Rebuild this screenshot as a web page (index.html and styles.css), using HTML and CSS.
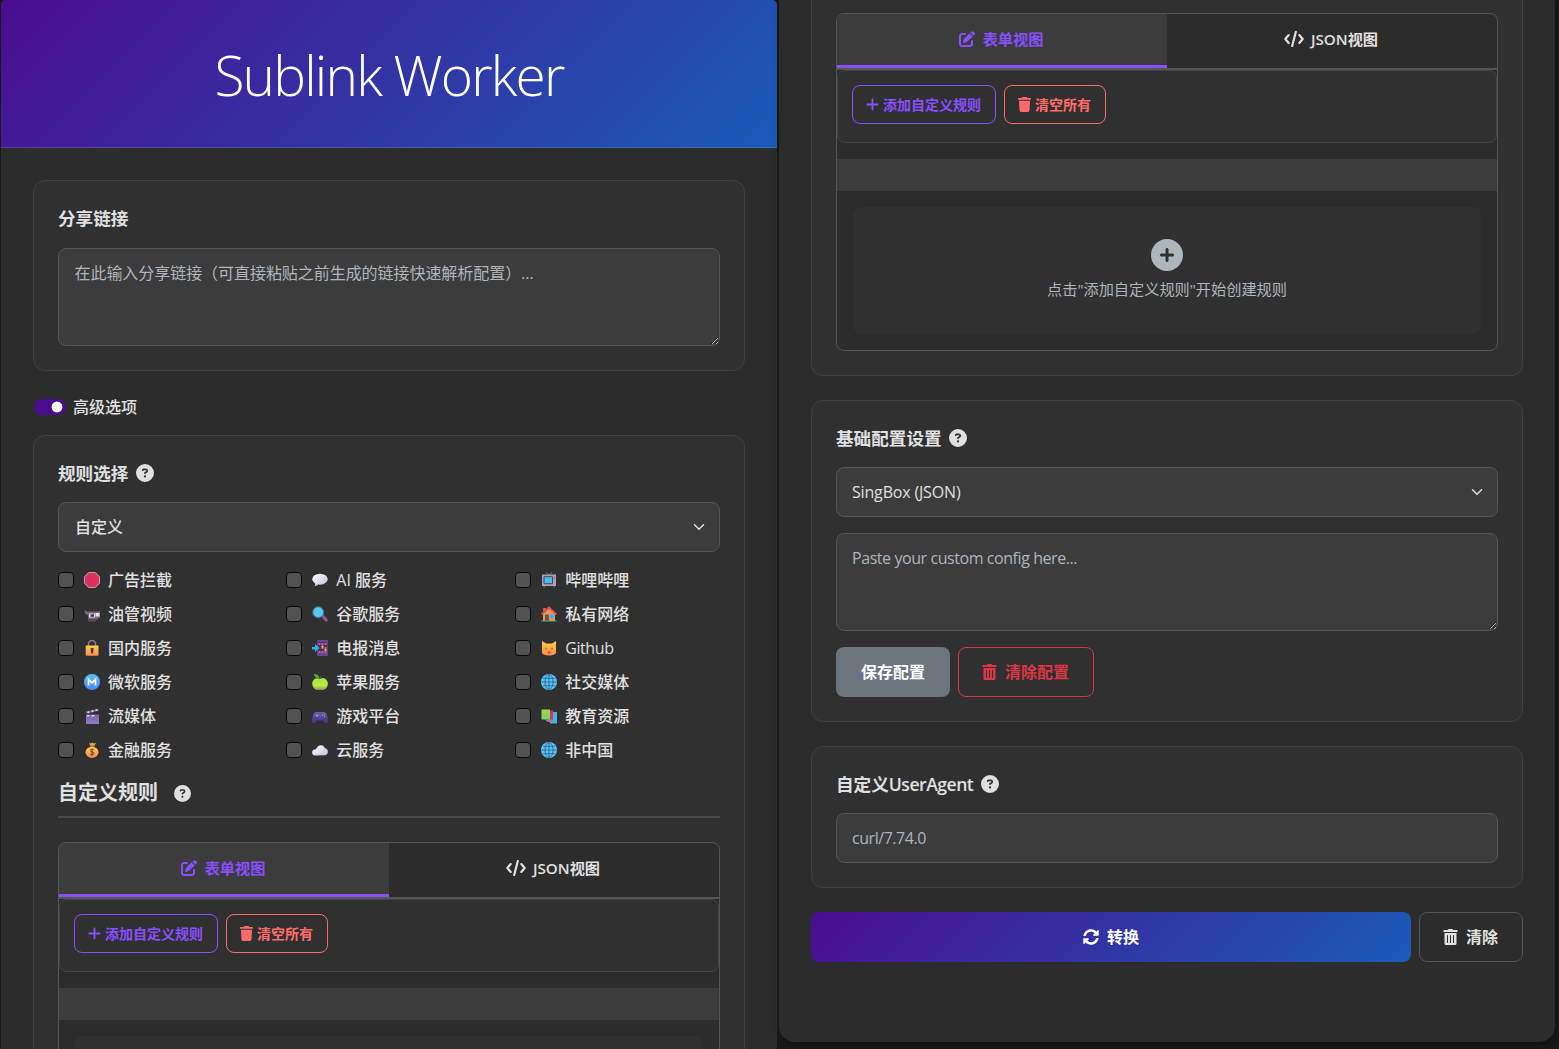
FILE: index.html
```html
<!DOCTYPE html>
<html lang="zh-CN">
<head>
<meta charset="utf-8">
<title>Sublink Worker</title>
<link rel="stylesheet" href="styles.css">
</head>
<body>
<svg class="sprite" aria-hidden="true">
  <defs>
    <linearGradient id="g-red"><stop offset="0" stop-color="#cf2f71"/><stop offset="1" stop-color="#e8304c"/></linearGradient>
    <linearGradient id="g-gold" x2="0" y2="1"><stop offset="0" stop-color="#ffd044"/><stop offset="1" stop-color="#f78a4e"/></linearGradient>
    <linearGradient id="g-white" x2="1" y2="1"><stop offset="0" stop-color="#ffffff"/><stop offset="1" stop-color="#c9bfdc"/></linearGradient>
    <linearGradient id="g-blue" x2="0" y2="1"><stop offset="0" stop-color="#4fc3f7"/><stop offset="1" stop-color="#4b86f5"/></linearGradient>
    <linearGradient id="g-purple" x2="0" y2="1"><stop offset="0" stop-color="#7a6499"/><stop offset="1" stop-color="#8d7bd0"/></linearGradient>
    <linearGradient id="g-pad" x2="0" y2="1"><stop offset="0" stop-color="#6a5fa8"/><stop offset="1" stop-color="#532a80"/></linearGradient>
    <linearGradient id="g-apple" x2="0" y2="1"><stop offset="0" stop-color="#9be83c"/><stop offset=".6" stop-color="#c2ea42"/><stop offset="1" stop-color="#8c9a62"/></linearGradient>
    <linearGradient id="g-green" x2="0" y2="1"><stop offset="0" stop-color="#a5d84c"/><stop offset="1" stop-color="#6fd070"/></linearGradient>
  </defs>
  <symbol id="question" viewBox="0 0 512 512"><path d="M256 512A256 256 0 1 0 256 0a256 256 0 1 0 0 512zM169.8 165.3c7.9-22.3 29.1-37.3 52.8-37.3h58.3c34.9 0 63.1 28.3 63.1 63.1c0 22.6-12.1 43.5-31.7 54.8L280 264.4c-.2 13-10.9 23.6-24 23.6c-13.3 0-24-10.7-24-24V250.5c0-8.6 4.6-16.5 12.1-20.8l44.3-25.4c4.7-2.7 7.6-7.7 7.6-13.1c0-8.4-6.8-15.1-15.1-15.1H222.6c-3.4 0-6.4 2.1-7.5 5.3l-.4 1.2c-4.4 12.5-18.2 19-30.6 14.6s-19-18.2-14.6-30.6l.4-1.2zM224 352a32 32 0 1 1 64 0 32 32 0 1 1 -64 0z"/></symbol>
  <symbol id="circle-plus" viewBox="0 0 512 512"><path d="M256 512A256 256 0 1 0 256 0a256 256 0 1 0 0 512zM232 344V280H168c-13.3 0-24-10.7-24-24s10.7-24 24-24h64V168c0-13.3 10.7-24 24-24s24 10.7 24 24v64h64c13.3 0 24 10.7 24 24s-10.7 24-24 24H280v64c0 13.3-10.7 24-24 24s-24-10.7-24-24z"/></symbol>
  <symbol id="plus" viewBox="0 0 448 512"><path d="M256 80c0-17.700-14.300-32-32-32s-32 14.300-32 32V224H48c-17.700 0-32 14.300-32 32s14.300 32 32 32H192V432c0 17.700 14.300 32 32 32s32-14.300 32-32V288H400c17.700 0 32-14.300 32-32s-14.300-32-32-32H256V80z"/></symbol>
  <symbol id="trash" viewBox="0 0 448 512"><path d="M135.200 17.700L128 32H32C14.300 32 0 46.300 0 64S14.300 96 32 96H416c17.700 0 32-14.300 32-32s-14.300-32-32-32H320l-7.200-14.300C307.400 6.800 296.300 0 284.200 0H163.800c-12.100 0-23.200 6.800-28.600 17.700zM416 128H32L53.200 467c1.600 25.300 22.600 45 47.900 45H346.900c25.300 0 46.300-19.700 47.900-45L416 128z"/></symbol>
  <symbol id="trash-alt" viewBox="0 0 448 512"><path d="M32 464a48 48 0 0 0 48 48h288a48 48 0 0 0 48-48V128H32zm272-256a16 16 0 0 1 32 0v224a16 16 0 0 1-32 0zm-96 0a16 16 0 0 1 32 0v224a16 16 0 0 1-32 0zm-96 0a16 16 0 0 1 32 0v224a16 16 0 0 1-32 0zM432 32H312l-9.400-18.700A24 24 0 0 0 281.100 0H166.800a23.720 23.720 0 0 0-21.400 13.300L136 32H16A16 16 0 0 0 0 48v32a16 16 0 0 0 16 16h416a16 16 0 0 0 16-16V48a16 16 0 0 0-16-16z"/></symbol>
  <symbol id="edit" viewBox="0 0 512 512"><path d="M471.600 21.700c-21.900-21.900-57.300-21.900-79.200 0L362.300 51.700l97.900 97.900 30.100-30.100c21.900-21.900 21.900-57.300 0-79.200L471.600 21.700zm-299.200 220c-6.100 6.100-10.800 13.600-13.500 21.900l-29.600 88.800c-2.900 8.600-.6 18.100 5.800 24.600s15.900 8.700 24.600 5.800l88.800-29.600c8.200-2.700 15.700-7.400 21.900-13.500L437.700 172.300 339.700 74.300 172.400 241.700zM96 64C43 64 0 107 0 160V416c0 53 43 96 96 96H352c53 0 96-43 96-96V320c0-17.700-14.300-32-32-32s-32 14.300-32 32v96c0 17.700-14.300 32-32 32H96c-17.700 0-32-14.300-32-32V160c0-17.700 14.300-32 32-32h96c17.700 0 32-14.300 32-32s-14.300-32-32-32H96z"/></symbol>
  <symbol id="sync" viewBox="0 0 512 512"><path d="M370.720 133.280C339.458 104.008 298.888 87.962 255.848 88c-77.458.068-144.328 53.178-162.791 126.850-1.344 5.363-6.122 9.150-11.651 9.150H24.103c-7.498 0-13.194-6.807-11.807-14.176C33.933 94.924 134.813 8 256 8c66.448 0 126.791 26.136 171.315 68.685L463.030 40.970C478.149 25.851 504 36.559 504 57.941V192c0 13.255-10.745 24-24 24H345.941c-21.382 0-32.090-25.851-16.971-40.971l41.750-41.749zM32 296h134.059c21.382 0 32.090 25.851 16.971 40.971l-41.750 41.750c31.262 29.273 71.835 45.319 114.876 45.280 77.418-.070 144.315-53.144 162.787-126.849 1.344-5.363 6.122-9.150 11.651-9.150h57.304c7.498 0 13.194 6.807 11.807 14.176C478.067 417.076 377.187 504 256 504c-66.448 0-126.791-26.136-171.315-68.685L48.970 471.030C33.851 486.149 8 475.441 8 454.059V320c0-13.255 10.745-24 24-24z"/></symbol>
  <symbol id="code" viewBox="0 0 640 512"><path d="M150 130 42 256l108 126M490 130l108 126-108 126M378 32 262 480" fill="none" stroke="currentColor" stroke-width="70" stroke-linecap="round" stroke-linejoin="round"/></symbol>

  <symbol id="e-stop" viewBox="0 0 16 16"><path d="M5 .3h6L15.700 5v6L11 15.700H5L.3 11V5z" fill="url(#g-red)" stroke="#dcd3e2" stroke-width=".8"/></symbol>
  <symbol id="e-camera" viewBox="0 0 16 16"><path d="M.5 4.500h2v1h11.500l2-.5v7H14v1.500H4V9L1 7.500z" fill="#75677f"/><path d="M5 7.500h6v4H5z" fill="#e3dbe8"/><path d="M6.500 8.200h3.500v2.600H6.500z" fill="#4b3d59"/><path d="M11.500 7h4v3.500h-4z" fill="#e9e2ed"/><path d="M4 13.500h8v2H4z" fill="#5c4669"/></symbol>
  <symbol id="e-lock" viewBox="0 0 16 16"><path d="M4.500 7V4a3.500 3.500 0 0 1 7 0v3" fill="none" stroke="#8d7d99" stroke-width="1.600"/><rect x="1.700" y="5.500" width="12.800" height="10.300" rx=".8" fill="url(#g-gold)"/><path d="M6.700 8h2.800v2.500L9 13.500H7.300L6.700 10.500z" fill="#50364c"/></symbol>
  <symbol id="e-metro" viewBox="0 0 16 16"><circle cx="8" cy="8" r="8" fill="url(#g-blue)"/><path d="M4.500 11.500V5.400L8 8.900l3.500-3.500v6.100" fill="none" stroke="#fff" stroke-width="1.700"/></symbol>
  <symbol id="e-clapper" viewBox="0 0 16 16"><path d="M2 6.500h13V16H2z" fill="url(#g-purple)"/><path d="m1.500 3.500 12.800-3 .5 2.600-12.800 3z" fill="#685080"/><path d="m3 4 2-1 1 1-2 1.500zm4-1 2-1 1 1-2 1.500zm4-1 2-1 1 1-2 1.200zM3 7h3L5 8.500H3zm5 0h3l-1 1.500H7z" fill="#d8d1f2"/></symbol>
  <symbol id="e-money" viewBox="0 0 16 16"><path d="M5 .5 7 1.500l1.500-1 1 1L12 .7l-2 4H6.500z" fill="#e6a83a"/><ellipse cx="8" cy="10.300" rx="6.500" ry="5.600" fill="url(#g-gold)"/><path d="M6 4h4" stroke="#a0596a"/><path d="M10 8c-.7-1-3.700-1-3.700.6 0 1.500 3.700 1 3.700 2.600S7 13 6 11.800M8 6.500V14" fill="none" stroke="#684046"/></symbol>
  <symbol id="e-bubble" viewBox="0 0 16 16"><path d="m2.500 10 4 1.500c-.5 1.800-2 2.600-4 2.800.8-1 .8-2 0-4.300" fill="#c7bdd8"/><ellipse cx="8" cy="7.200" rx="7.700" ry="5.500" fill="url(#g-white)"/></symbol>
  <symbol id="e-search" viewBox="0 0 16 16"><path d="m10.500 10 3.700 4" stroke="#875b8d" stroke-width="3.200" stroke-linecap="round"/><circle cx="6.200" cy="6.200" r="5.400" fill="#58c9ec" stroke="#367f9d"/></symbol>
  <symbol id="e-phone" viewBox="0 0 16 16"><rect x="5" width="11" height="16" rx="1" fill="#65489a"/><rect x="5.800" y="2" width="9.400" height="11" fill="#43346f"/><path d="M6.500 4h2m1 0h2m1 0h2m-5 4h2m1 0h2m-8 4h2m1 0h2m1 0h2" stroke="#ff795e" stroke-width="1.700"/><path d="M9.500 6.500h2m1 3.500h2" stroke="#ffd75d" stroke-width="1.500"/><path d="M0 7h3V4l4.500 4L3 12V9.500H0z" fill="#30afe9"/></symbol>
  <symbol id="e-apple" viewBox="0 0 16 16"><path d="M8 5c2-1.300 4.500-1.300 6.300.7 2.700 3 1.600 7.300-1.300 9.600-1.600 1.200-3 .5-5 .5s-3.500.5-5-.5C.2 13-.9 8.300 2 5.500 4 3.700 6 4.200 8 5z" fill="url(#g-apple)"/><path d="M1.500.3c4-.6 6 1 6 4.200C4.200 4.500 2.500 3 1.500.3z" fill="#56a82c"/><path d="M7.500 5 9 2" stroke="#78593c"/></symbol>
  <symbol id="e-game" viewBox="0 0 16 16"><path d="M4 4h8c3 0 4 6 3.800 9-.1 2.500-1.600 3-3 1.500L11 12.500H5l-1.800 2c-1.400 1.500-3 .8-3-1.500C.1 10 1 4 4 4z" fill="url(#g-pad)"/><path d="M3.500 7.500h3M5 6v3" stroke="#6fa7cf"/><circle cx="12.500" cy="6" r=".8" fill="#f0555f"/><circle cx="12.500" cy="8.500" r=".8" fill="#4bb878"/><circle cx="10.700" cy="7.200" r=".8" fill="#4fa4e9"/></symbol>
  <symbol id="e-cloud" viewBox="0 0 16 16"><path d="M3.500 13.500C-.7 13.500-1 8 2.700 7.500 4 7.500 4 7 5 5.500c2-3.500 7-3 7.800.8 4 .3 4.200 6.200.2 6.900z" fill="url(#g-white)"/></symbol>
  <symbol id="e-tv" viewBox="0 0 16 16"><path d="m5 .5 3 2.500 3-2.500" fill="none" stroke="#8b8291" stroke-width=".8"/><path d="M1 2.500h14v11.500H1z" fill="#aba1b3"/><path d="M3 4.700h8.500v7H3z" fill="#43bdf3" stroke="#4d3f5b"/><path d="M13 4.500h1v3h-1z" fill="#dd5370"/><path d="M2 14h12v1.500h-2V14H4v1.500H2z" fill="#64507b"/></symbol>
  <symbol id="e-house" viewBox="0 0 16 16"><path d="M2 2h3v5H2z" fill="#b9654f"/><path d="M2 8 8 2l6 6v7H2z" fill="#d99a67"/><path d="m.7 8.500 7.300-7 7.300 7" fill="none" stroke="#ed5142" stroke-width="1.800"/><path d="M4 8.500h4V15H4z" fill="#80503f"/><path d="M9 8.500h4v3.500H9z" fill="#47ade4"/><path d="M.3 15h15.400" stroke="#42b66f"/></symbol>
  <symbol id="e-cat" viewBox="0 0 16 16"><path d="M1 1l4 2.500h6L15 1v11.500c0 4-14 4-14 0z" fill="url(#g-gold)"/><path d="M4.500 8.500h1M10.500 8.500h1" stroke="#5b3e3c" stroke-width="1.600"/><path d="M6 11.500h4L8 14z" fill="#d93953"/></symbol>
  <symbol id="e-globe" viewBox="0 0 16 16"><circle cx="8" cy="8" r="8" fill="#5cc4f8"/><path d="M8 .5v15M.5 8h15M2 4.300h12M2 11.700h12" stroke="#24608d" stroke-width=".8"/><ellipse cx="8" cy="8" rx="4" ry="7.500" fill="none" stroke="#24608d" stroke-width=".8"/></symbol>
  <symbol id="e-books" viewBox="0 0 16 16"><path d="M9 4h7v11.500H9z" fill="#3eb7ed"/><path d="M7 2.500h5V14H7z" fill="#dc2f65"/><path d="M3.500 11.500H12V14H7z" fill="#b87696"/><path d="M.5 1.500H9v10H.5z" fill="url(#g-green)"/></symbol>
</svg>

<div class="screen">
  <section class="pane pane-start">
    <header class="hero"><h1>Sublink Worker</h1></header>
    <div class="pane-body">
      <div class="card">
        <label class="label">分享链接</label>
        <textarea class="control area share" placeholder="在此输入分享链接（可直接粘贴之前生成的链接快速解析配置）..."></textarea>
      </div>
      <div class="switch-row"><span class="switch"></span><span>高级选项</span></div>
      <div class="card tall">
        <label class="label">规则选择 <svg class="help"><use href="#question"/></svg></label>
        <div class="control select"><span>自定义</span><svg class="chevron" viewBox="0 0 16 16"><path d="m2 5 6 6 6-6"/></svg></div>
        <div class="rules">
          <label><i class="box"></i><svg><use href="#e-stop"/></svg><span>广告拦截</span></label>
          <label><i class="box"></i><svg><use href="#e-bubble"/></svg><span>AI 服务</span></label>
          <label><i class="box"></i><svg><use href="#e-tv"/></svg><span>哔哩哔哩</span></label>
          <label><i class="box"></i><svg><use href="#e-camera"/></svg><span>油管视频</span></label>
          <label><i class="box"></i><svg><use href="#e-search"/></svg><span>谷歌服务</span></label>
          <label><i class="box"></i><svg><use href="#e-house"/></svg><span>私有网络</span></label>
          <label><i class="box"></i><svg><use href="#e-lock"/></svg><span>国内服务</span></label>
          <label><i class="box"></i><svg><use href="#e-phone"/></svg><span>电报消息</span></label>
          <label><i class="box"></i><svg><use href="#e-cat"/></svg><span class="github">Github</span></label>
          <label><i class="box"></i><svg><use href="#e-metro"/></svg><span>微软服务</span></label>
          <label><i class="box"></i><svg><use href="#e-apple"/></svg><span>苹果服务</span></label>
          <label><i class="box"></i><svg><use href="#e-globe"/></svg><span>社交媒体</span></label>
          <label><i class="box"></i><svg><use href="#e-clapper"/></svg><span>流媒体</span></label>
          <label><i class="box"></i><svg><use href="#e-game"/></svg><span>游戏平台</span></label>
          <label><i class="box"></i><svg><use href="#e-books"/></svg><span>教育资源</span></label>
          <label><i class="box"></i><svg><use href="#e-money"/></svg><span>金融服务</span></label>
          <label><i class="box"></i><svg><use href="#e-cloud"/></svg><span>云服务</span></label>
          <label><i class="box"></i><svg><use href="#e-globe"/></svg><span>非中国</span></label>
        </div>
        <h2 class="section-title">自定义规则 <svg class="help small"><use href="#question"/></svg></h2>
        <div class="custom">
          <div class="tabs">
            <div class="tab active"><svg class="i-edit"><use href="#edit"/></svg>表单视图</div>
            <div class="tab"><svg class="i-code"><use href="#code"/></svg><span>JSON视图</span></div>
          </div>
          <div class="toolbar">
            <button class="mini add"><svg><use href="#plus"/></svg>添加自定义规则</button>
            <button class="mini wipe"><svg><use href="#trash"/></svg>清空所有</button>
          </div>
          <div class="strip"></div>
          <div class="empty"></div>
        </div>
      </div>
    </div>
  </section>

  <section class="pane pane-end">
    <div class="card continued">
      <div class="custom">
        <div class="tabs">
          <div class="tab active"><svg class="i-edit"><use href="#edit"/></svg>表单视图</div>
          <div class="tab"><svg class="i-code"><use href="#code"/></svg><span>JSON视图</span></div>
        </div>
        <div class="toolbar">
          <button class="mini add"><svg><use href="#plus"/></svg>添加自定义规则</button>
          <button class="mini wipe"><svg><use href="#trash"/></svg>清空所有</button>
        </div>
        <div class="strip"></div>
        <div class="empty"><svg><use href="#circle-plus"/></svg><p>点击"添加自定义规则"开始创建规则</p></div>
      </div>
    </div>
    <div class="card">
      <label class="label">基础配置设置 <svg class="help"><use href="#question"/></svg></label>
      <div class="control select format"><span>SingBox (JSON)</span><svg class="chevron" viewBox="0 0 16 16"><path d="m2 5 6 6 6-6"/></svg></div>
      <textarea class="control area config" placeholder="Paste your custom config here..."></textarea>
      <div class="actions">
        <button class="btn save">保存配置</button>
        <button class="btn clear-config"><svg><use href="#trash-alt"/></svg>清除配置</button>
      </div>
    </div>
    <div class="card">
      <label class="label"><span>自定义<span class="agent">UserAgent</span></span> <svg class="help"><use href="#question"/></svg></label>
      <input class="control agent-input" placeholder="curl/7.74.0">
    </div>
    <div class="actions submit">
      <button class="btn convert"><svg><use href="#sync"/></svg>转换</button>
      <button class="btn clear"><svg><use href="#trash-alt"/></svg>清除</button>
    </div>
  </section>
</div>
</body>
</html>
```
FILE: styles.css
```css
* { box-sizing: border-box; }
body {
  margin: 0;
  height: 1049px;
  overflow: hidden;
  background: #191919;
  color: #e0e0e0;
  font: 16px/24px "Open Sans", "Noto Sans CJK SC", sans-serif;
}
.sprite { position: absolute; width: 0; height: 0; }
.screen { display: flex; gap: 2px; padding-left: 1px; align-items: flex-start; }
.pane { width: 776px; background: #2c2c2c; }
.pane-start { height: 1049px; overflow: hidden; border-radius: 5px 5px 0 0; }
.pane-end {
  height: 1042px;
  padding: 0 32px;
  border-radius: 0 0 16px 16px;
  box-shadow: 4px 4px 12px rgba(0, 0, 0, .25);
  display: flex;
  flex-direction: column;
  gap: 24px;
}
.hero {
  height: 148px;
  padding-top: 33px;
  border-bottom: 1px solid rgba(255, 255, 255, .13);
  background: linear-gradient(135deg, #4b0d90, #1a5bb8) border-box;
  text-align: center;
}
.hero h1 { margin: 0; color: #fff; font-size: 55px; font-weight: 300; line-height: 84px; letter-spacing: -1.8px; }
.pane-body { padding: 32px; }
.card { flex: none; padding: 24px; border: 1px solid #404040; border-radius: 12px; background: #303030; }
.tall { height: 820px; }
.continued { height: 376px; padding-top: 13px; border-top: 0; border-radius: 0 0 12px 12px; }
.label { display: flex; align-items: center; gap: 7.500px; height: 26px; margin-bottom: 16px; font-size: 17.600px; font-weight: 700; }
.pane-start .card:first-child .label { margin-bottom: 17px; }
.help { width: 18px; height: 18px; fill: currentColor; }
.help.small { width: 17px; height: 17px; }
.control {
  display: block;
  width: 100%;
  height: 50px;
  padding: 12px 16px;
  border: 1px solid #555;
  border-radius: 8px;
  background: #3c3c3c;
  color: #e0e0e0;
  font: inherit;
}
.control::placeholder { color: #adb5bd; opacity: 1; }
.area { height: 98px; }
.share { padding-left: 15.500px; letter-spacing: -.05px; }
.select { display: flex; align-items: center; justify-content: space-between; font-weight: 500; }
.format { padding-left: 15px; font-weight: 400; letter-spacing: -.17px; }
.chevron { width: 12px; height: 12px; margin-right: -2px; fill: none; stroke: #e0e0e0; stroke-width: 2; stroke-linecap: round; }
.config { margin: 16px 0; padding-left: 15px; letter-spacing: -.43px; }
.agent { font-weight: 600; letter-spacing: -.5px; }
.agent-input { padding-left: 15px; letter-spacing: -.45px; }
.github { font-weight: 400; letter-spacing: -.4px; }
.switch-row { display: flex; align-items: center; gap: 7px; height: 24px; margin: 24px 0 16px; font-weight: 500; }
.switch { width: 32px; height: 16px; margin-left: 1px; border-radius: 8px; background: radial-gradient(circle at 23px 8px, #fff 5px, #4b0d90 5.800px); }
.rules { display: grid; grid-template-columns: 228.300px 228.900px 1fr; grid-auto-rows: 34px; margin-top: 11px; font-weight: 500; }
.rules label { display: flex; align-items: center; }
.rules svg { width: 16px; height: 16px; margin: 0 8px 0 10px; }
.box { width: 16px; height: 16px; border: 1px solid #080808; border-radius: 4px; background: #525252; }
.section-title { display: flex; align-items: center; gap: 16px; height: 51px; margin: 0 0 24px; padding-top: 3px; border-bottom: 2px solid #484848; font-size: 20px; font-weight: 600; }
.custom { height: 338px; border: 1px solid #555; border-radius: 8px; overflow: hidden; background: #2c2c2c; }
.tabs { display: grid; grid-template-columns: 1fr 1fr; height: 56px; border-bottom: 2px solid #555; }
.tab { display: flex; align-items: center; justify-content: center; gap: 7px; padding: 0 2px 5px 0; font-size: 15.200px; font-weight: 600; }
.tab.active { gap: 8px; padding-bottom: 2px; border-bottom: 3px solid #894ffc; background: #3c3c3c; color: #894ffc; }
.i-edit { width: 16px; height: 16px; fill: currentColor; }
.i-code { width: 20px; height: 16px; }
.toolbar { display: flex; align-items: flex-start; gap: 8px; height: 73px; padding: 14px; border: 1px solid #444; border-radius: 8px; background: #303030; }
.mini { display: flex; align-items: center; gap: 4px; height: 39px; padding: 0 14px 0 13px; border: 1px solid; border-radius: 8px; background: none; font: 600 14px/21px "Open Sans", "Noto Sans CJK SC", sans-serif; }
.mini svg { width: 13px; height: 15px; fill: currentColor; }
.add { width: 144px; color: #894ffc; }
.wipe { width: 102px; color: #ff6b6b; }
.strip { height: 32px; margin-top: 16px; background: #3c3c3c; }
.empty { display: flex; flex-direction: column; align-items: center; height: 127px; margin: 16px; padding-top: 32px; border-radius: 8px; background: #303030; color: #adb5bd; font-size: 15.200px; }
.empty svg { width: 32px; height: 32px; margin-right: 1px; fill: currentColor; }
.empty p { margin: 6px 0 0; }
.actions { display: flex; gap: 8px; }
.btn { display: flex; align-items: center; justify-content: center; gap: 8px; height: 50px; padding: 0; border: 1px solid transparent; border-radius: 8px; background: none; color: #e0e0e0; font: 600 16px/24px "Open Sans", "Noto Sans CJK SC", sans-serif; }
.btn svg { width: 15px; height: 16px; fill: currentColor; }
.save { width: 114px; background: #6c757d; color: #fff; }
.clear-config { width: 136px; padding-right: 1px; border-color: #dc3545; color: #dc3545; }
.convert { width: 600px; background: linear-gradient(135deg, #4b0d90, #1a5bb8) border-box; color: #fff; }
.convert svg { width: 16px; }
.clear { width: 104px; padding-right: 1px; border-color: #555; }
```
